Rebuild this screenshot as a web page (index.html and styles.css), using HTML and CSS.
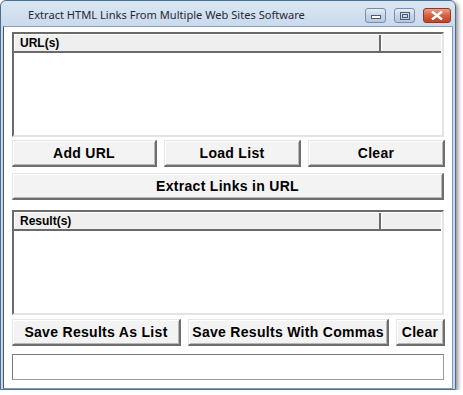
FILE: index.html
```html
<!DOCTYPE html>
<html>
<head>
<meta charset="utf-8">
<link rel="stylesheet" href="styles.css">
</head>
<body>
<div class="window">
  <div class="titlebar">
    <span class="title">Extract HTML Links From Multiple Web Sites Software</span>
    <div class="caption-btns">
      <div class="cbtn cmin"><svg width="10" height="4" viewBox="0 0 10 4"><rect x="0.5" y="0.5" width="9" height="3" fill="#fff" stroke="#4a5d75"/></svg></div>
      <div class="cbtn cmax"><svg width="10" height="8" viewBox="0 0 10 8"><rect x="0.5" y="0.5" width="9" height="7" fill="none" stroke="#4a5d75"/><rect x="2.5" y="2.5" width="5" height="3" fill="none" stroke="#4a5d75"/></svg></div>
      <div class="cbtn cclose"><svg width="12" height="9" viewBox="0 0 12 9"><path d="M1 0.5 L11 8.5 M11 0.5 L1 8.5" stroke="#fff" stroke-width="2.4"/></svg></div>
    </div>
  </div>
  <div class="client">
    <div class="listview lv-url">
      <div class="lv-header">
        <div class="col col1">URL(s)</div>
        <div class="col col2"></div>
      </div>
      <div class="lv-body"></div>
    </div>
    <div class="row row-url">
      <div class="btn">Add URL</div>
      <div class="btn">Load List</div>
      <div class="btn">Clear</div>
    </div>
    <div class="btn btn-extract">Extract Links in URL</div>
    <div class="listview lv-res">
      <div class="lv-header">
        <div class="col col1">Result(s)</div>
        <div class="col col2"></div>
      </div>
      <div class="lv-body"></div>
    </div>
    <div class="row row-save">
      <div class="btn">Save Results As List</div>
      <div class="btn">Save Results With Commas</div>
      <div class="btn">Clear</div>
    </div>
    <div class="status"></div>
  </div>
</div>
</body>
</html>
```

FILE: styles.css
```css
html, body {
  margin: 0;
  padding: 0;
  background: #ffffff;
}

.window {
  position: relative;
  width: 456px;
  height: 390px;
  box-sizing: border-box;
  background: linear-gradient(#dbe6f3, #c9d9ec 26px, #c9d9ec);
  border: 1px solid #4c6e8e;
  border-radius: 6px 6px 0 0;
  box-shadow: 2px 2px 4px rgba(0, 0, 0, 0.45);
  display: flex;
  flex-direction: column;
  padding: 0 2px 3px 2px;
}

.titlebar {
  height: 25px;
  flex: none;
  display: flex;
  align-items: center;
  position: relative;
}

.title {
  font-family: "Noto Sans", "DejaVu Sans", sans-serif;
  font-size: 11.1px;
  color: #1f2a36;
  margin-left: 25px;
  margin-top: 2px;
}

.caption-btns {
  position: absolute;
  right: 2px;
  top: 7px;
  display: flex;
  gap: 8px;
}

.cbtn {
  height: 15px;
  box-sizing: border-box;
  border: 1px solid #7a8ea8;
  border-radius: 3px;
  display: flex;
  align-items: center;
  justify-content: center;
  background: linear-gradient(#e6eef7, #c6d5e8 50%, #b7c9e0);
}

.cmin {
  width: 21px;
}

.cmin svg {
  margin-top: 3px;
}

.cmax {
  width: 21px;
}

.cclose {
  width: 28px;
  border-color: #8b3a2a;
  background: linear-gradient(#e9a08c, #d5603f 50%, #c0452a);
}

.client {
  flex: 1;
  background: #ffffff;
  border: 1px solid #8a9db3;
  border-left-color: #4d5560;
  padding: 5px 8px 8px 8px;
  display: flex;
  flex-direction: column;
  font-family: "Liberation Sans", Arial, sans-serif;
}

.listview {
  box-sizing: border-box;
  border-top: 2px solid #6a6a6a;
  border-left: 2px solid #6a6a6a;
  border-right: 2px solid #e4e4e4;
  border-bottom: 2px solid #e4e4e4;
  background: #fff;
  display: flex;
  flex-direction: column;
}

.lv-url {
  height: 105px;
}

.lv-res {
  height: 105px;
  margin-top: 10px;
}

.lv-header {
  display: flex;
  height: 19px;
  flex: none;
  box-sizing: border-box;
  border-top: 1px solid #ffffff;
  border-bottom: 2px solid #6a6a6a;
  background: #efefef;
  margin-right: 1px;
}

.col {
  box-sizing: border-box;
  font-weight: bold;
  font-size: 12px;
  color: #000;
  padding-left: 5px;
  line-height: 16px;
  border-left: 1px solid #ffffff;
}

.col1 {
  width: 367px;
  border-right: 2px solid #6a6a6a;
}

.col2 {
  flex: 1;
}

.lv-body {
  flex: 1;
}

.row {
  display: grid;
  column-gap: 7px;
  height: 27px;
}

.row-url {
  grid-template-columns: 145px 137px 137px;
  margin-top: 3px;
}

.row-save {
  grid-template-columns: 169px 201px 49px;
  margin-top: 4px;
}

.btn {
  box-sizing: border-box;
  height: 27px;
  background: #f3f3f3;
  border-top: 1px solid #e6e6e6;
  border-left: 1px solid #e6e6e6;
  border-right: 2px solid #6e6e6e;
  border-bottom: 2px solid #6e6e6e;
  box-shadow: inset 1px 1px 0 #ffffff, inset -1px -1px 0 #b8b8b8;
  display: flex;
  align-items: center;
  justify-content: center;
  font-weight: bold;
  font-size: 14px;
  letter-spacing: 0.3px;
  color: #000;
  white-space: nowrap;
}

.btn-extract {
  margin-top: 6px;
}

.status {
  margin-top: 8px;
  height: 26px;
  box-sizing: border-box;
  border: 1px solid #7a7a7a;
  border-right-color: #9a9a9a;
  border-bottom-color: #9a9a9a;
  background: #fff;
}
```
